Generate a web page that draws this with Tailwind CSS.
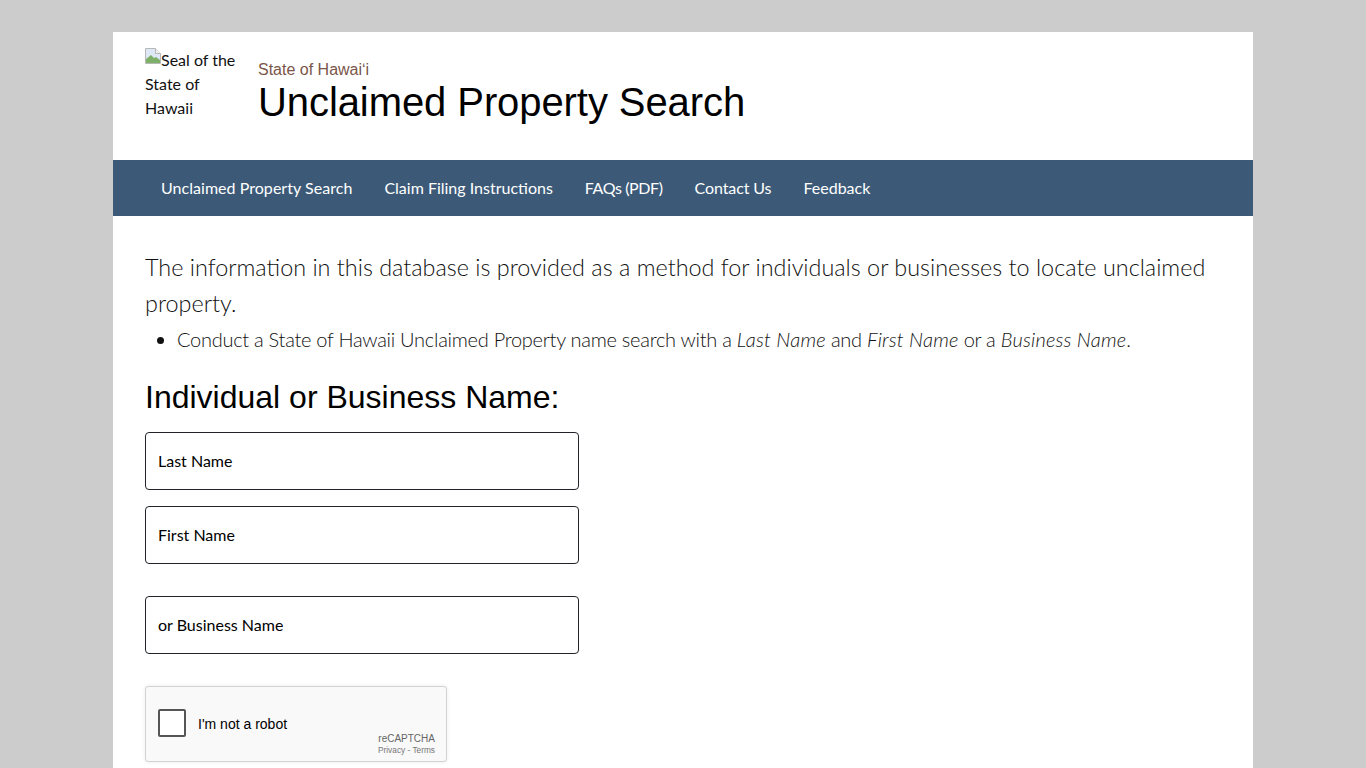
<!DOCTYPE html>
<html lang="en">
<head>
    <meta charset="UTF-8">
    <title>Unclaimed Property Search</title>
    <script src="https://cdn.jsdelivr.net/npm/@tailwindcss/browser@4"></script>
</head>
<body class="bg-[#cccccc] h-screen overflow-hidden font-['Lato',sans-serif] text-[#111111]">
    <div class="w-[1140px] min-h-[736px] ml-[113px] mt-[32px] bg-white">
        <!-- Header -->
        <header class="h-[128px] px-8 pt-4 flex">
            <div class="w-[96px] mr-[17px] text-base leading-[24px] shrink-0">
                <svg class="inline-block align-top" width="16" height="16" viewBox="0 0 16 16">
                    <path d="M.5.500h10l5 5v10H.5z" fill="#dfe8f6" stroke="#b8b8b8"/>
                    <path d="M10.500.500v5h5" fill="#f4f4f4" stroke="#b8b8b8"/>
                    <path d="M1 15v-4l5-4 3 3 2-1 4 3v3z" fill="#7fb069"/>
                </svg><span>Seal of the State of Hawaii</span>
            </div>
            <div class="pt-[12px]">
                <div class="font-['Liberation_Sans',sans-serif] text-base leading-[20px] text-[#7a5548]">State of Hawai&#699;i</div>
                <h1 class="font-['Liberation_Sans',sans-serif] text-[40px] leading-[48px] tracking-[-0.08px] text-black -mt-[2px]">Unclaimed Property Search</h1>
            </div>
        </header>

        <!-- Nav -->
        <nav class="h-14 bg-[#3c5a78] pl-8 flex items-center text-white text-base">
            <a class="px-4 tracking-[0.04px]" href="#">Unclaimed Property Search</a>
            <a class="px-4" href="#">Claim Filing Instructions</a>
            <a class="px-4 tracking-[-0.4px]" href="#">FAQs (PDF)</a>
            <a class="px-4 tracking-[-0.1px]" href="#">Contact Us</a>
            <a class="px-4" href="#">Feedback</a>
        </nav>

        <!-- Main -->
        <main class="px-8 pt-[33px]">
            <p class="text-[23.4px] leading-[36px] font-light">The information in this database is provided as a method for individuals or businesses to locate unclaimed property.</p>
            <ul class="list-disc pl-8 text-xl leading-[36px] tracking-[-0.27px] font-light">
                <li>Conduct a State of Hawaii Unclaimed Property name search with a <em class="tracking-[0.2px]">Last Name</em> and <em class="tracking-[0.2px]">First Name</em> or a <em class="tracking-[0.2px]">Business Name</em>.</li>
            </ul>
            <h2 class="font-['Liberation_Sans',sans-serif] text-[32px] leading-[38px] text-black mt-[21px] mb-4">Individual or Business Name:</h2>
            <form>
                <input class="block w-[434px] h-[58px] px-3 pb-[2px] border border-[#212529] rounded text-base text-black placeholder:text-black mb-4" placeholder="Last Name">
                <input class="block w-[434px] h-[58px] px-3 pb-[2px] border border-[#212529] rounded text-base text-black placeholder:text-black mb-8" placeholder="First Name">
                <input class="block w-[434px] h-[58px] px-3 pb-[2px] border border-[#212529] rounded text-base text-black placeholder:text-black mb-8" placeholder="or Business Name">
                <div class="w-[302px] h-[76px] bg-[#f9f9f9] border border-[#d3d3d3] rounded-[3px] shadow-[0_0_4px_rgba(0,0,0,0.08)] flex items-center pl-3 pr-[11px] font-['Liberation_Sans',sans-serif]">
                    <span class="w-7 h-7 bg-white border-2 border-[#555555] rounded-[2px] shrink-0 -mt-[2px]"></span>
                    <span class="ml-3 text-sm text-black">I'm not a robot</span>
                    <div class="ml-auto self-end pb-[5px] text-right text-[#666666]">
                        <div class="text-[10px] leading-[13px]">reCAPTCHA</div>
                        <div class="text-[8.3px] leading-[11px] text-[#777777]">Privacy - Terms</div>
                    </div>
                </div>
            </form>
        </main>
    </div>
</body>
</html>
